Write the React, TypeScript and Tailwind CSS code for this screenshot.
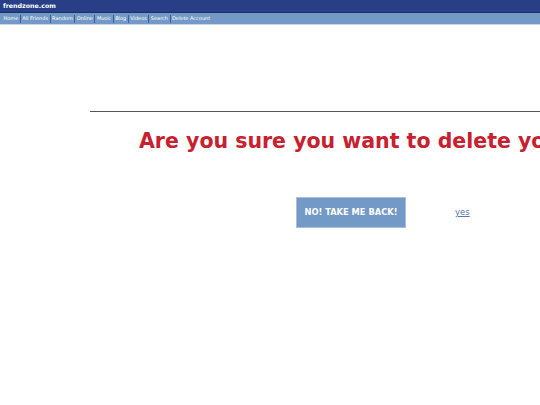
export default function App() {
  const links = ["Home", "All Friends", "Random", "Online", "Music", "Blog", "Videos", "Search", "Delete Account"];

  return (
    <div className="w-[540px] h-[405px] overflow-hidden bg-white font-['DejaVu_Sans',Verdana,sans-serif]">
      {/* Top bar */}
      <div className="h-[13px] bg-[#283f87] border-b border-[#1e2f6a] px-[3px] flex items-center">
        <span className="text-white text-[6.3px] font-bold leading-none">frendzone.com</span>
      </div>
      {/* Nav */}
      <div className="h-[12px] bg-[#7399c6] border-b border-[#c9d6ee] flex items-center pl-[2px]">
        {links.map((l, i) => (
          <span key={l} className="flex items-center h-full">
            {i > 0 && <span className="w-px h-[8px] bg-[#3f5f9a]" />}
            <span className="text-white text-[5px] leading-none px-[1.5px] whitespace-nowrap">{l}</span>
          </span>
        ))}
      </div>

      {/* Content */}
      <div className="ml-[90px] w-[800px] pt-[86px]">
        <div className="border-t border-[#555]" />
        <h1 className="mt-[14px] pl-[49px] text-[20.5px] font-bold text-[#c8202f] leading-[30px] whitespace-nowrap">
          Are you sure you want to delete your account?
        </h1>
        <div className="mt-[41px] flex items-center">
          <button className="ml-[206px] w-[110px] h-[31px] bg-[#7399c6] border border-[#a8bfe0] text-white text-[8.3px] font-bold">
            NO! TAKE ME BACK!
          </button>
          <a href="#" className="ml-[49px] text-[8.5px] text-[#5a78b0] underline">
            yes
          </a>
        </div>
      </div>
    </div>
  );
}
